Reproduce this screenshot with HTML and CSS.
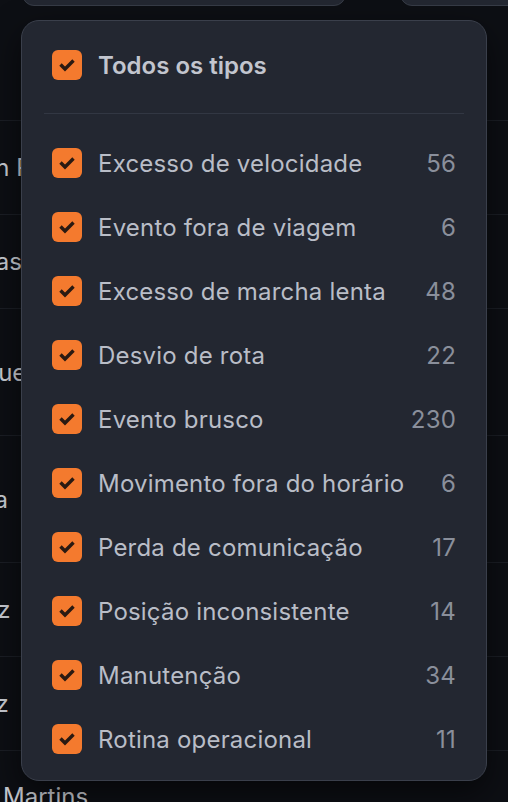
FILE: index.html
```html
<!DOCTYPE html>
<html lang="pt-BR">
<head>
    <meta charset="UTF-8">
    <meta name="viewport" content="width=device-width, initial-scale=1.0">
    <title>Filtro de tipos de evento</title>
    <link rel="stylesheet" href="styles.css">
</head>
<body>
    <div class="page">
        <div class="filters">
            <div class="field field-wide"></div>
            <div class="field field-right"></div>
        </div>

        <div class="table">
            <div class="table-row row-short"><span class="cell-name">Juan Rocha</span></div>
            <div class="table-row row-short"><span class="cell-name">Lucas</span></div>
            <div class="table-row row-tall"><span class="cell-name">Roque</span></div>
            <div class="table-row row-tall"><span class="cell-name">Silva</span></div>
            <div class="table-row row-short"><span class="cell-name">Diniz</span></div>
            <div class="table-row row-short"><span class="cell-name">Ortiz</span></div>
            <div class="table-row row-last"><span class="cell-name cell-start">Martins</span></div>
        </div>

        <!-- dropdown: tipos de evento -->
        <div class="dropdown">
            <label class="option option-all">
                <span class="check"><svg viewBox="0 0 30 30"><path d="M8.5 14.5 L13 19 L21.5 10.5"/></svg></span>
                <span class="option-label">Todos os tipos</span>
            </label>
            <div class="divider"></div>

            <label class="option">
                <span class="check"><svg viewBox="0 0 30 30"><path d="M8.5 14.5 L13 19 L21.5 10.5"/></svg></span>
                <span class="option-label">Excesso de velocidade</span>
                <span class="option-count">56</span>
            </label>
            <label class="option">
                <span class="check"><svg viewBox="0 0 30 30"><path d="M8.5 14.5 L13 19 L21.5 10.5"/></svg></span>
                <span class="option-label">Evento fora de viagem</span>
                <span class="option-count">6</span>
            </label>
            <label class="option">
                <span class="check"><svg viewBox="0 0 30 30"><path d="M8.5 14.5 L13 19 L21.5 10.5"/></svg></span>
                <span class="option-label">Excesso de marcha lenta</span>
                <span class="option-count">48</span>
            </label>
            <label class="option">
                <span class="check"><svg viewBox="0 0 30 30"><path d="M8.5 14.5 L13 19 L21.5 10.5"/></svg></span>
                <span class="option-label">Desvio de rota</span>
                <span class="option-count">22</span>
            </label>
            <label class="option">
                <span class="check"><svg viewBox="0 0 30 30"><path d="M8.5 14.5 L13 19 L21.5 10.5"/></svg></span>
                <span class="option-label">Evento brusco</span>
                <span class="option-count">230</span>
            </label>
            <label class="option">
                <span class="check"><svg viewBox="0 0 30 30"><path d="M8.5 14.5 L13 19 L21.5 10.5"/></svg></span>
                <span class="option-label">Movimento fora do horário</span>
                <span class="option-count">6</span>
            </label>
            <label class="option">
                <span class="check"><svg viewBox="0 0 30 30"><path d="M8.5 14.5 L13 19 L21.5 10.5"/></svg></span>
                <span class="option-label">Perda de comunicação</span>
                <span class="option-count">17</span>
            </label>
            <label class="option">
                <span class="check"><svg viewBox="0 0 30 30"><path d="M8.5 14.5 L13 19 L21.5 10.5"/></svg></span>
                <span class="option-label">Posição inconsistente</span>
                <span class="option-count">14</span>
            </label>
            <label class="option">
                <span class="check"><svg viewBox="0 0 30 30"><path d="M8.5 14.5 L13 19 L21.5 10.5"/></svg></span>
                <span class="option-label">Manutenção</span>
                <span class="option-count">34</span>
            </label>
            <label class="option">
                <span class="check"><svg viewBox="0 0 30 30"><path d="M8.5 14.5 L13 19 L21.5 10.5"/></svg></span>
                <span class="option-label">Rotina operacional</span>
                <span class="option-count">11</span>
            </label>
        </div>
    </div>
</body>
</html>
```

FILE: styles.css
```css
body {
    margin: 0;
    background-color: #0d0f14;
    font-family: Inter, "Noto Sans", sans-serif;
    color: #c7cad2;
    overflow: hidden;
}
.page {
    position: relative;
    width: 508px;
    height: 802px;
    overflow: hidden;
}
.filters {
    display: flex;
    gap: 54px;
    margin-top: -38px;
    padding-left: 22px;
}
.field {
    height: 42px;
    background: #232731;
    border: 1px solid #373c47;
    border-radius: 12px;
}
.field-wide {
    width: 322px;
}
.field-right {
    flex: 1;
    margin-right: -40px;
}
.table {
    margin-top: 76px;
    padding-top: 38px;
}
.table-row {
    display: flex;
    align-items: center;
    border-top: 1px solid #1b1e25;
    font-size: 24px;
    color: #c9ccd3;
}
.cell-name {
    margin-left: -46px;
}
.row-short {
    height: 93px;
}
.row-tall {
    height: 126px;
}
.row-last {
    height: 60px;
    align-items: flex-start;
    padding-top: 31px;
}
.cell-start {
    margin-left: 3px;
}

/* dropdown */
.dropdown {
    position: absolute;
    left: 21px;
    top: 20px;
    width: 448px;
    padding: 12px 8px 9px;
    background: #232731;
    border: 1px solid #3a3f4b;
    border-radius: 18px;
    box-shadow: 0 12px 32px rgba(0, 0, 0, 0.55);
}
.option {
    display: flex;
    align-items: center;
    height: 64px;
    padding: 0 22px;
    font-size: 24px;
    letter-spacing: 0.2px;
    color: #b9bdc7;
    cursor: pointer;
}
.option-all .option-label {
    font-weight: 600;
    letter-spacing: 0;
    color: #c2c5ce;
}
.check {
    flex: none;
    width: 30px;
    height: 30px;
    margin-right: 16px;
    background: #f47a2e;
    border-radius: 6px;
}
.check svg {
    display: block;
    width: 30px;
    height: 30px;
    fill: none;
    stroke: #2a1a12;
    stroke-width: 3.4;
}
.option-label {
    flex: 1;
}
.option-count {
    color: #8a8f9b;
}
.divider {
    height: 1px;
    margin: 16px 14px 17px;
    background: #323743;
}
```
